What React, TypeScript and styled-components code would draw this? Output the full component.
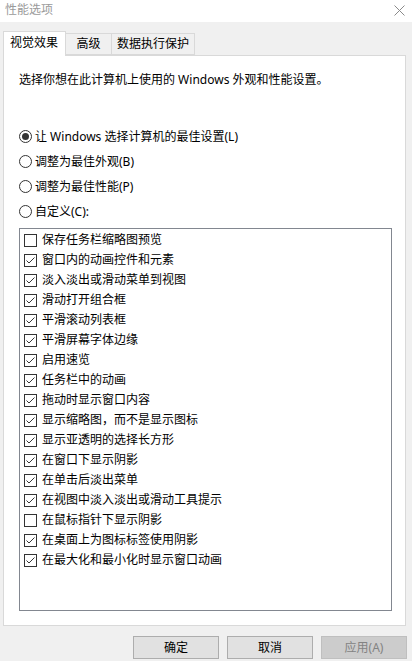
import React, {useState} from 'react';
import styled, {createGlobalStyle} from 'styled-components';

const GlobalStyle = createGlobalStyle`
  html, body {
    margin: 0;
    padding: 0;
    background: #f0f0f0;
    overflow: hidden;
  }
  body {
    font-family: "Noto Sans", "Noto Sans CJK SC", sans-serif;
    font-size: 12px;
    color: #000;
  }
`;

const tabs = ['视觉效果', '高级', '数据执行保护'];

const radios = [
  '让 Windows 选择计算机的最佳设置(L)',
  '调整为最佳外观(B)',
  '调整为最佳性能(P)',
  '自定义(C):',
];

const effects: {label: string; on: boolean}[] = [
  {label: '保存任务栏缩略图预览', on: false},
  {label: '窗口内的动画控件和元素', on: true},
  {label: '淡入淡出或滑动菜单到视图', on: true},
  {label: '滑动打开组合框', on: true},
  {label: '平滑滚动列表框', on: true},
  {label: '平滑屏幕字体边缘', on: true},
  {label: '启用速览', on: true},
  {label: '任务栏中的动画', on: true},
  {label: '拖动时显示窗口内容', on: true},
  {label: '显示缩略图，而不是显示图标', on: true},
  {label: '显示亚透明的选择长方形', on: true},
  {label: '在窗口下显示阴影', on: true},
  {label: '在单击后淡出菜单', on: true},
  {label: '在视图中淡入淡出或滑动工具提示', on: true},
  {label: '在鼠标指针下显示阴影', on: false},
  {label: '在桌面上为图标标签使用阴影', on: true},
  {label: '在最大化和最小化时显示窗口动画', on: true},
];

const App: React.FC = () => {
  const [mode, setMode] = useState(0);
  const [items, setItems] = useState(effects);

  const toggle = (i: number) =>
    setItems(prev => prev.map((it, k) => (k === i ? {...it, on: !it.on} : it)));

  return (
    <>
      <GlobalStyle />
      <Window>
        <TitleBar>
          <Title>性能选项</Title>
          <CloseIcon width="11" height="11" viewBox="0 0 11 11">
            <path d="M0.5 0.5 L10.5 10.5 M10.5 0.5 L0.5 10.5" stroke="#8a8a8a" strokeWidth="1" fill="none" />
          </CloseIcon>
        </TitleBar>

        <TabRow>
          {tabs.map((t, i) => (
            <Tab key={t} $active={i === 0}>
              {t}
            </Tab>
          ))}
        </TabRow>

        <Panel>
          <Intro>选择你想在此计算机上使用的 Windows 外观和性能设置。</Intro>

          <RadioGroup>
            {radios.map((r, i) => (
              <RadioRow key={r} onClick={() => setMode(i)}>
                <RadioCircle>{mode === i && <RadioDot />}</RadioCircle>
                <span>{r}</span>
              </RadioRow>
            ))}
          </RadioGroup>

          <ListBox>
            {items.map((it, i) => (
              <CheckRow key={it.label} onClick={() => toggle(i)}>
                <CheckBox>
                  {it.on && (
                    <svg width="11" height="11" viewBox="0 0 11 11">
                      <polyline points="1.5,5.5 4,8 9.5,2.5" stroke="#333" strokeWidth="1" fill="none" />
                    </svg>
                  )}
                </CheckBox>
                <span>{it.label}</span>
              </CheckRow>
            ))}
          </ListBox>
        </Panel>

        <ButtonRow>
          <DialogButton>确定</DialogButton>
          <DialogButton>取消</DialogButton>
          <DialogButton disabled>应用(A)</DialogButton>
        </ButtonRow>
      </Window>
    </>
  );
};

const Window = styled.div`
  display: flex;
  flex-direction: column;
  width: 412px;
  height: 661px;
  background: #f0f0f0;
`;

const TitleBar = styled.div`
  display: flex;
  align-items: center;
  justify-content: space-between;
  height: 22px;
  padding: 0 7px 3px 5px;
  box-sizing: border-box;
  background: #fff;
`;

const Title = styled.span`
  color: #9a9a9a;
  font-size: 12px;
  line-height: 16px;
`;

const CloseIcon = styled.svg`
  display: block;
  margin-top: 1px;
`;

const TabRow = styled.div`
  display: flex;
  align-items: flex-end;
  margin-top: 9px;
  padding-left: 3px;
  position: relative;
  z-index: 1;
`;

const Tab = styled.div<{$active?: boolean}>`
  box-sizing: border-box;
  min-width: 47px;
  text-align: center;
  height: ${({$active}) => ($active ? '25px' : '22px')};
  padding: ${({$active}) => ($active ? '3px 7px 0 6px' : '2px 5px 0 5px')};
  margin-bottom: ${({$active}) => ($active ? '-1px' : '0')};
  margin-left: ${({$active}) => ($active ? '0' : '-1px')};
  border: 1px solid #d9d9d9;
  border-bottom: ${({$active}) => ($active ? 'none' : '1px solid #d9d9d9')};
  background: ${({$active}) => ($active ? '#fff' : '#f0f0f0')};
  line-height: 16px;
  white-space: nowrap;
  &:first-child {
    margin-left: 0;
  }
`;

const Panel = styled.div`
  box-sizing: border-box;
  height: 571px;
  margin: 0 6px 0 3px;
  padding: 16px 0 0 15px;
  background: #fff;
  border: 1px solid #d9d9d9;
  display: flex;
  flex-direction: column;
`;

const Intro = styled.div`
  line-height: 16px;
`;

const RadioGroup = styled.div`
  display: flex;
  flex-direction: column;
  margin-top: 36px;
`;

const RadioRow = styled.div`
  display: flex;
  align-items: center;
  gap: 3px;
  height: 25px;
  line-height: 16px;
  cursor: default;
`;

const RadioCircle = styled.div`
  box-sizing: border-box;
  width: 13px;
  height: 13px;
  border: 1px solid #333;
  border-radius: 50%;
  display: flex;
  align-items: center;
  justify-content: center;
`;

const RadioDot = styled.div`
  width: 7px;
  height: 7px;
  border-radius: 50%;
  background: #333;
`;

const ListBox = styled.div`
  box-sizing: border-box;
  width: 373px;
  height: 383px;
  margin-top: 4px;
  padding: 1px 0 0 4px;
  border: 1px solid #828790;
  background: #fff;
`;

const CheckRow = styled.div`
  display: flex;
  align-items: center;
  gap: 5px;
  height: 20px;
  line-height: 16px;
  cursor: default;
`;

const CheckBox = styled.div`
  box-sizing: border-box;
  width: 13px;
  height: 13px;
  border: 1px solid #333;
  background: #fff;
  display: flex;
  align-items: center;
  justify-content: center;
`;

const ButtonRow = styled.div`
  display: flex;
  justify-content: flex-end;
  gap: 8px;
  margin-top: 10px;
  padding-right: 5px;
`;

const DialogButton = styled.button`
  box-sizing: border-box;
  width: 86px;
  height: 23px;
  padding: 0;
  border: 1px solid #adadad;
  background: #e1e1e1;
  font-family: "Noto Sans", "Noto Sans CJK SC", sans-serif;
  font-size: 12px;
  line-height: 16px;
  color: #000;
  &:disabled {
    background: #cccccc;
    border-color: #bfbfbf;
    color: #838383;
  }
`;

export default App;
